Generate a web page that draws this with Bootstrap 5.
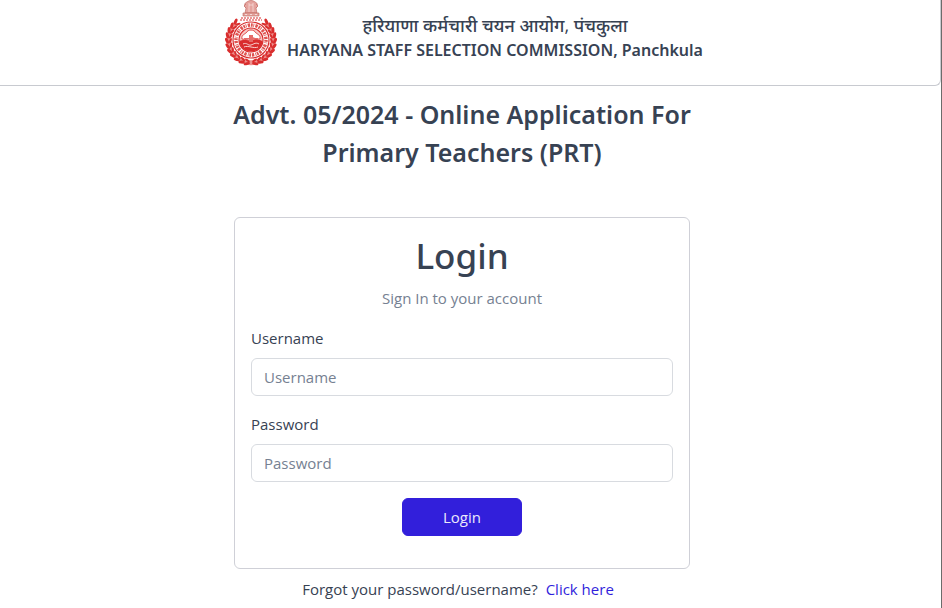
<!DOCTYPE html>
<html lang="en">
<head>
<meta charset="utf-8">
<meta name="viewport" content="width=device-width, initial-scale=1">
<title>HSSC - Login</title>
<link href="https://cdn.jsdelivr.net/npm/bootstrap@5.3.0/dist/css/bootstrap.min.css" rel="stylesheet">
<style>
  body { font-family: "Open Sans", "Noto Sans", sans-serif; font-size: 15px; line-height: 24px; color: #374253; }
  .page-frame { border-right: 1px solid #6b6b6b; }
  .site-header { border: 1px solid #c8cad0; border-width: 0 1px 1px 0; border-radius: 0 0 6px 0; height: 86px; padding-right: 12px; }
  .site-name { font-family: "Noto Sans", "Open Sans", sans-serif; font-size: 16px; line-height: 24px; font-weight: 600; }
  .site-name-hi { font-size: 18px; line-height: 26px; font-weight: 500; }
  .emblem { width: 54px; height: 68px; }
  .page-body { padding: 9px 17px 0 0; }
  .page-column { max-width: 480px; }
  .advt-title { font-family: "Noto Sans", "Open Sans", sans-serif; font-size: 25px; line-height: 38px; font-weight: 600; }
  .login-card { border-color: #cfd0d7; margin-top: 46px; }
  .login-title { font-family: "Noto Sans", "Open Sans", sans-serif; font-size: 35px; line-height: 44px; font-weight: 500; }
  .login-hint { color: #768192; }
  .form-label { line-height: 24px; }
  .form-control { font-size: 15px; line-height: 24px; border-color: #d8dbe0; }
  .form-control::placeholder { color: #768192; }
  .btn-login { --bs-btn-bg: #321fdb; --bs-btn-border-color: #321fdb; --bs-btn-hover-bg: #2a1ab9; --bs-btn-hover-border-color: #2a1ab9; --bs-btn-color: #ebe9fb; --bs-btn-hover-color: #fff; width: 120px; font-size: 15px; line-height: 24px; }
  .help-link { color: #321fdb; }
</style>
</head>
<body>
<div class="page-frame min-vh-100">
  <header class="site-header d-flex justify-content-center align-items-start">
    <svg class="emblem flex-shrink-0" viewBox="0 0 54 68" role="img" aria-label="Government of Haryana emblem">
      <defs>
        <g id="leaf"><ellipse cx="0" cy="-24" rx="3.2" ry="1.5" transform="rotate(24 0 -24)"/><ellipse cx="0" cy="-20.6" rx="2.8" ry="1.1" transform="rotate(-24 0 -20.6)"/></g>
        <g id="branch">
          <use href="#leaf" transform="rotate(40)"/><use href="#leaf" transform="rotate(53)"/><use href="#leaf" transform="rotate(66)"/><use href="#leaf" transform="rotate(79)"/><use href="#leaf" transform="rotate(92)"/><use href="#leaf" transform="rotate(105)"/><use href="#leaf" transform="rotate(118)"/><use href="#leaf" transform="rotate(131)"/><use href="#leaf" transform="rotate(144)"/><use href="#leaf" transform="rotate(157)"/><use href="#leaf" transform="rotate(170)"/>
        </g>
      </defs>
      <g transform="translate(26 40)" fill="#d92d2d">
        <path d="M14-17A22.3 22.3 0 1 1-14-17" fill="none" stroke="#ee8f8c" stroke-width="5"/>
        <use href="#branch"/><use href="#branch" transform="scale(-1 1)"/>
        <circle r="18" fill="#fff" stroke="#d92d2d" stroke-width="1.2"/>
        <circle r="15" fill="none" stroke="#df5350" stroke-width="3.4" stroke-dasharray="1.8 .7 .8 1.2 2.4 .9"/>
        <circle r="12" fill="#f7c6c4" stroke="#d92d2d" stroke-width="1.2"/>
        <path d="M-11.5 1C-7-1-4 1 0 0S7-1 11.5 1C11.5 7 6 11.5 0 11.5S-11.5 7-11.5 1Z"/>
        <path d="M-9-1C-10-5-6-6-5-7-3-11 3-11 5-7 6-6 10-5 9-1 5 0 3-3 0-2S-5 0-9-1Z" fill="#fff" stroke="#e04b48"/>
        <path d="M-2-5h4v7h-4zM-7-2h14v1H-7z" fill="#e56b68"/>
        <path d="M-8 4C-4 2-3 6 0 5S5 2 8 4M-7 7C-3 5 3 9 7 7" fill="none" stroke="#f9d2d0" stroke-width="1"/>
      </g>
      <g fill="#e5a49f" stroke="#bd655c" stroke-width=".6">
        <path d="M21 8C19 6 19 3 22 2 24 0 28 0 30 2 33 3 33 6 31 8L32 13H20Z"/>
        <path d="M18 13h16v3H18zM21 4l-2 2 2 2M31 4l2 2-2 2"/>
        <path d="M24 3v9M28 3v9M24 5h4" fill="none" stroke="#fbeceb"/>
        <path d="M20 14.5h2m3 0h2m3 0h2" stroke="#fff"/>
        <path d="M16 18h20M15 20h22" stroke="#d92d2d" stroke-width="1" stroke-dasharray="2 1"/>
      </g>
    </svg>
    <div class="text-center ms-2 pt-2">
      <div class="site-name-hi pt-1" lang="hi">हरियाणा कर्मचारी चयन आयोग, पंचकुला</div>
      <div class="site-name">HARYANA STAFF SELECTION COMMISSION, Panchkula</div>
    </div>
  </header>

  <div class="page-body">
    <main class="page-column mx-auto px-2">
      <h1 class="advt-title text-center mb-0">Advt. 05/2024 - Online Application For Primary Teachers (PRT)</h1>
      <div class="px-1">
      <form class="card login-card" action="#" method="post">
        <div class="card-body">
          <h2 class="login-title text-center mb-2">Login</h2>
          <p class="login-hint text-center mb-3">Sign In to your account</p>
          <div class="mb-3">
            <label class="form-label mb-2" for="username">Username</label>
            <input class="form-control" type="text" id="username" placeholder="Username">
          </div>
          <div class="mb-3">
            <label class="form-label mb-2" for="password">Password</label>
            <input class="form-control" type="password" id="password" placeholder="Password">
          </div>
          <div class="text-center mb-3">
            <button class="btn btn-login" type="submit">Login</button>
          </div>
        </div>
      </form>
      <p class="text-center pt-2 pe-2 mb-0">Forgot your password/username? <a class="help-link text-decoration-none ms-1" href="#">Click here</a></p>
      </div>
    </main>
  </div>
</div>
<script src="https://cdn.jsdelivr.net/npm/bootstrap@5.3.0/dist/js/bootstrap.bundle.min.js"></script>
</body>
</html>
